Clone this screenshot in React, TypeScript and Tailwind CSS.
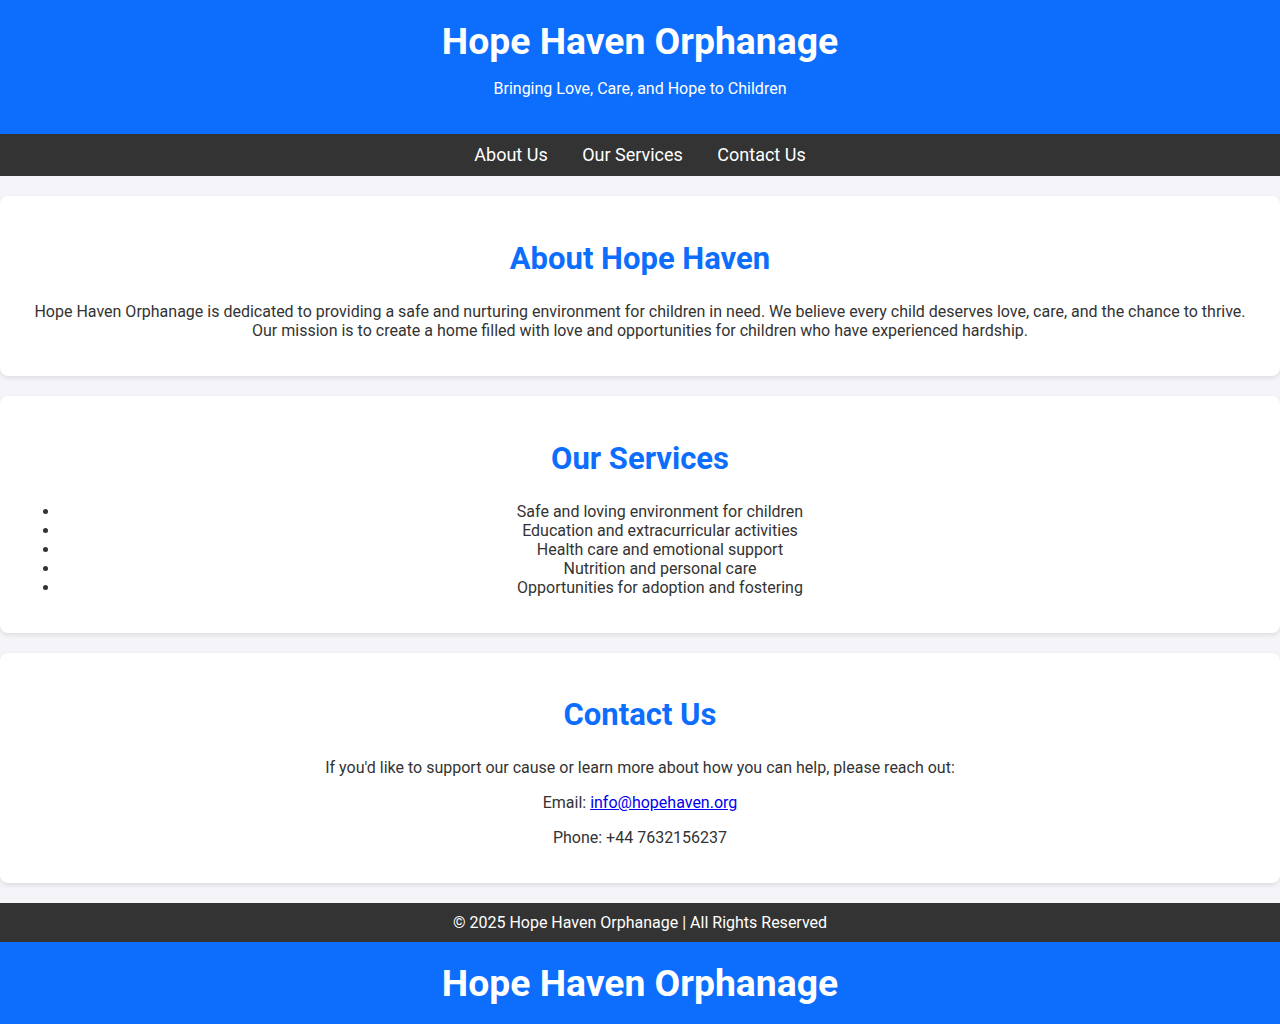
export default function App() {
  const services = [
    'Safe and loving environment for children',
    'Education and extracurricular activities',
    'Health care and emotional support',
    'Nutrition and personal care',
    'Opportunities for adoption and fostering',
  ]

  return (
    <div className="min-h-screen bg-[#f4f4f9] text-[#333] font-['Roboto',sans-serif] leading-[normal] text-base">
      <Header />

      <nav className="bg-[#333] py-[10px] text-center text-[18px] leading-[22px]">
        <a href="#about" className="mx-[15px] text-white">About Us</a>{' '}
        <a href="#services" className="mx-[15px] text-white">Our Services</a>{' '}
        <a href="#contact" className="mx-[15px] text-white">Contact Us</a>
      </nav>

      <section id="about" className="my-5 rounded-lg bg-white p-5 text-center shadow-[0_2px_5px_rgba(0,0,0,0.1)]">
        <h2 className="my-[24.9px] text-[31px] leading-[36px] font-bold text-[#0d6efd]">About Hope Haven</h2>
        <p className="my-4">
          Hope Haven Orphanage is dedicated to providing a safe and nurturing environment for children in need. We believe every child deserves love, care, and the chance to thrive. Our mission is to create a home filled with love and opportunities for children who have experienced hardship.
        </p>
      </section>

      <section id="services" className="my-5 rounded-lg bg-white p-5 text-center shadow-[0_2px_5px_rgba(0,0,0,0.1)]">
        <h2 className="my-[24.9px] text-[31px] leading-[36px] font-bold text-[#0d6efd]">Our Services</h2>
        <ul className="my-4 list-disc pl-10">
          {services.map(s => <li key={s}>{s}</li>)}
        </ul>
      </section>

      <section id="contact" className="my-5 rounded-lg bg-white p-5 text-center shadow-[0_2px_5px_rgba(0,0,0,0.1)]">
        <h2 className="my-[24.9px] text-[31px] leading-[36px] font-bold text-[#0d6efd]">Contact Us</h2>
        <p className="my-4">If you'd like to support our cause or learn more about how you can help, please reach out:</p>
        <p className="my-4">Email: <a href="mailto:info@hopehaven.org" className="text-[#0000ee] underline">info@hopehaven.org</a></p>
        <p className="my-4">Phone: +44 7632156237</p>
      </section>

      <footer className="bg-[#333] py-[10px] text-center text-white">
        © 2025 Hope Haven Orphanage | All Rights Reserved
      </footer>

      <Header />
    </div>
  )
}

function Header() {
  return (
    <header className="bg-[#0d6efd] py-5 text-center text-white">
      <h1 className="m-0 text-[37.3px] leading-[43px] font-bold">Hope Haven Orphanage</h1>
      <p className="my-4">Bringing Love, Care, and Hope to Children</p>
    </header>
  )
}
